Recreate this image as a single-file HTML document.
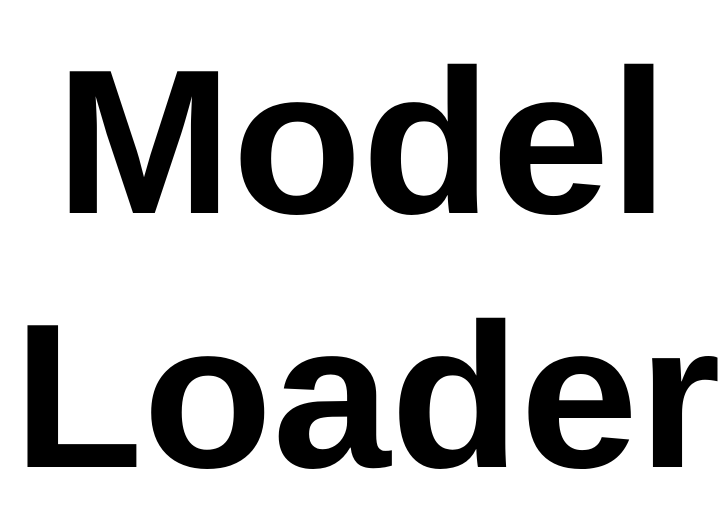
<!DOCTYPE html>
<html><head><style>
html,body{margin:0;padding:0;background:#fff;width:722px;height:522px;overflow:hidden}
.t{font-family:"Liberation Sans",Arial,sans-serif;font-weight:bold;font-size:206px;line-height:254px;color:#000;white-space:nowrap;position:absolute;left:0;width:722px;text-align:center;transform:scaleX(1.03);transform-origin:361px 0}
</style></head><body>
<div class="t" style="top:15px;left:1px">Model</div>
<div class="t" style="top:269px;left:6px">Loader</div>
</body></html>
